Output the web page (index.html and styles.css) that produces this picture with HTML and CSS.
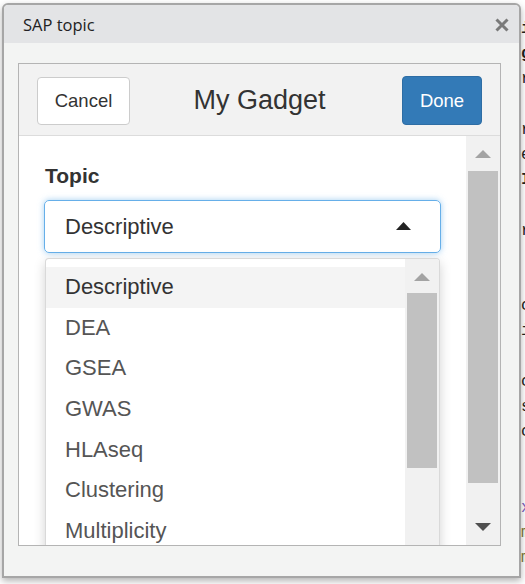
FILE: index.html
```html
<!DOCTYPE html>
<html>
<head>
<meta charset="utf-8">
<title>SAP topic</title>
<link rel="stylesheet" href="styles.css">
</head>
<body>
<pre class="bg-code"><b>i</b>
<b>g</b>
r

r
e
<b>I</b>

r


c
i

c
s
c


<span class="kw">x</span>
<span class="ol">m</span>
<span class="ol">m</span></pre>

<div class="dialog">
  <div class="titlebar">
    <span class="title">SAP topic</span>
    <button class="close" aria-label="Close">
      <svg width="14" height="14" viewBox="0 0 14 14"><path d="M1.5 1.5 L12.5 12.5 M12.5 1.5 L1.5 12.5" stroke="#7a7a7a" stroke-width="3" fill="none"/></svg>
    </button>
  </div>
  <div class="dialog-body">
    <div class="frame">
      <div class="gadget-header">
        <button class="btn btn-default">Cancel</button>
        <h1 class="gadget-title">My Gadget</h1>
        <button class="btn btn-primary">Done</button>
      </div>
      <div class="gadget-content">
        <div class="scroll-area">
          <label class="field-label">Topic</label>
          <div class="select">
            <span>Descriptive</span>
            <svg class="caret" width="15" height="8" viewBox="0 0 15 8"><path d="M0 8 L7.5 0 L15 8 Z" fill="#222"/></svg>
          </div>
          <div class="dropdown">
            <ul class="options">
              <li class="option active">Descriptive</li>
              <li class="option">DEA</li>
              <li class="option">GSEA</li>
              <li class="option">GWAS</li>
              <li class="option">HLAseq</li>
              <li class="option">Clustering</li>
              <li class="option">Multiplicity</li>
              <li class="option">Survival</li>
            </ul>
            <div class="vscroll inner">
              <div class="arrow-box up"><svg width="16" height="8" viewBox="0 0 16 8"><path d="M0 8 L8 0 L16 8 Z" fill="#a3a3a3"/></svg></div>
              <div class="thumb inner-thumb"></div>
            </div>
          </div>
        </div>
        <div class="vscroll outer">
          <div class="arrow-box up"><svg width="16" height="8" viewBox="0 0 16 8"><path d="M0 8 L8 0 L16 8 Z" fill="#a3a3a3"/></svg></div>
          <div class="thumb outer-thumb"></div>
          <div class="arrow-box down"><svg width="16" height="8" viewBox="0 0 16 8"><path d="M0 0 L8 8 L16 0 Z" fill="#505050"/></svg></div>
        </div>
      </div>
    </div>
  </div>
</div>
</body>
</html>
```

FILE: styles.css
```css
* { box-sizing: border-box; }

html, body {
  margin: 0;
  padding: 0;
  width: 525px;
  height: 584px;
  overflow: hidden;
  background: #ffffff;
}

.bg-code {
  margin: 0;
  padding: 17px 0 0 521px;
  font-family: "Liberation Mono", monospace;
  font-size: 16px;
  line-height: 25.2px;
  color: #222;
  white-space: pre;
}
.bg-code .kw { color: #7a5cc0; }
.bg-code .ol { color: #7d7a3a; }

.dialog {
  position: absolute;
  left: 2px;
  top: 3px;
  width: 519px;
  height: 575px;
  border: 2px solid #a6a6a6;
  border-radius: 6px 6px 0 0;
  background: #f3f4f3;
  box-shadow: 0 3px 7px rgba(0, 0, 0, 0.3);
  display: flex;
  flex-direction: column;
  overflow: hidden;
}

.titlebar {
  height: 38px;
  flex: none;
  background: #e3e4e6;
  border-radius: 4px 4px 0 0;
  display: flex;
  align-items: center;
  justify-content: space-between;
  padding: 0 10px 0 19px;
}
.title {
  font-family: "Open Sans", "Noto Sans", sans-serif;
  font-size: 16.5px;
  color: #222;
  margin-top: 1px;
}
.close {
  border: 0;
  background: transparent;
  padding: 0;
  width: 14px;
  height: 14px;
  display: block;
  margin-top: 1px;
}
.close svg { display: block; }

.dialog-body {
  flex: 1;
  min-height: 0;
  display: flex;
  flex-direction: column;
  padding: 20px 18px 30px 14px;
}

.frame {
  flex: 1;
  min-height: 0;
  border: 1px solid #b4b4b4;
  background: #ffffff;
  display: flex;
  flex-direction: column;
  overflow: hidden;
  font-family: "Liberation Sans", Arial, sans-serif;
}

.gadget-header {
  height: 72px;
  flex: none;
  background: #f2f2f2;
  border-bottom: 1px solid #dcdcdc;
  display: grid;
  grid-template-columns: 1fr auto 1fr;
  align-items: start;
  padding: 12px 18px 0 18px;
}
.btn {
  font-family: "Liberation Sans", Arial, sans-serif;
  font-size: 18.5px;
  border-radius: 4px;
  height: 48px;
  padding: 0;
  cursor: pointer;
}
.btn-default {
  justify-self: start;
  width: 93px;
  margin-top: 1px;
  background: #ffffff;
  color: #333;
  border: 1px solid #cccccc;
}
.btn-primary {
  justify-self: end;
  width: 80px;
  height: 49px;
  background: #337ab7;
  color: #ffffff;
  border: 1px solid #2e6da4;
}
.gadget-title {
  margin: 0;
  font-weight: normal;
  font-size: 27px;
  color: #333;
  line-height: 48px;
}

.gadget-content {
  flex: 1;
  min-height: 0;
  display: flex;
  overflow: hidden;
  background: #ffffff;
}

.scroll-area {
  flex: 1;
  min-height: 0;
  overflow: hidden;
  padding: 28px 0 0 25px;
  display: flex;
  flex-direction: column;
  align-items: flex-start;
}

.field-label {
  font-weight: bold;
  font-size: 21px;
  line-height: 24px;
  color: #333;
  padding-left: 1px;
}

.select {
  margin-top: 12px;
  width: 397px;
  height: 53px;
  flex: none;
  border: 1px solid #66afe9;
  border-radius: 5px;
  box-shadow: 0 0 6px rgba(102, 175, 233, 0.6);
  display: flex;
  align-items: center;
  justify-content: space-between;
  padding: 0 29px 0 20px;
  font-size: 22px;
  color: #333;
}
.caret { display: block; margin-top: -2px; }

.dropdown {
  margin-top: 5px;
  margin-left: 1px;
  width: 395px;
  height: 330px;
  flex: none;
  border: 1px solid rgba(0, 0, 0, 0.15);
  border-radius: 4px;
  box-shadow: 0 4px 12px rgba(0, 0, 0, 0.18);
  background: #ffffff;
  display: flex;
  overflow: hidden;
}
.options {
  list-style: none;
  margin: 0;
  padding: 8px 0 0 0;
  flex: 1;
}
.option {
  height: 40.6px;
  display: flex;
  align-items: center;
  padding-left: 19px;
  font-size: 22px;
  color: #555;
}
.option.active {
  background: #f4f4f4;
  color: #333;
}

.vscroll {
  flex: none;
  width: 34px;
  background: #f1f1f1;
  display: flex;
  flex-direction: column;
  align-items: center;
}
.vscroll.outer { height: 100%; }
.arrow-box {
  display: flex;
  align-items: center;
  justify-content: center;
  width: 100%;
}
.arrow-box svg { display: block; }
.thumb {
  width: 30px;
  background: #c1c1c1;
}
.inner .arrow-box.up { height: 34px; padding-top: 2px; }
.inner-thumb { height: 175px; }
.outer .arrow-box.up { height: 35px; padding-top: 1px; }
.outer-thumb { height: 312px; }
.outer .arrow-box.down { flex: 1; align-items: flex-end; padding-bottom: 14px; }
```
